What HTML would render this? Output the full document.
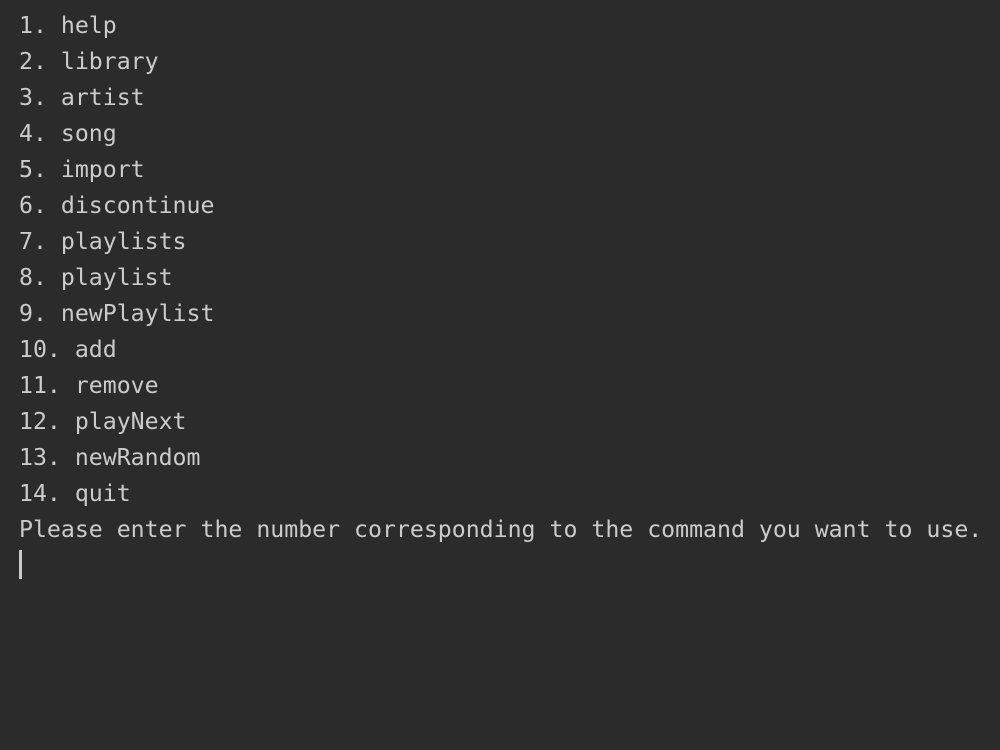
<!DOCTYPE html>
<html><head><style>
html,body{margin:0;padding:0;background:#2b2b2b;width:1000px;height:750px;overflow:hidden}
pre{margin:0;position:absolute;left:19px;top:8px;font-family:"DejaVu Sans Mono","Liberation Mono",monospace;font-size:23.2px;line-height:36px;color:#cbcbcb}
.c{position:absolute;left:19px;top:550px;width:3px;height:29px;background:#cbcbcb}
</style></head><body>
<pre>1. help
2. library
3. artist
4. song
5. import
6. discontinue
7. playlists
8. playlist
9. newPlaylist
10. add
11. remove
12. playNext
13. newRandom
14. quit
Please enter the number corresponding to the command you want to use.</pre>
<div class="c"></div>
</body></html>
